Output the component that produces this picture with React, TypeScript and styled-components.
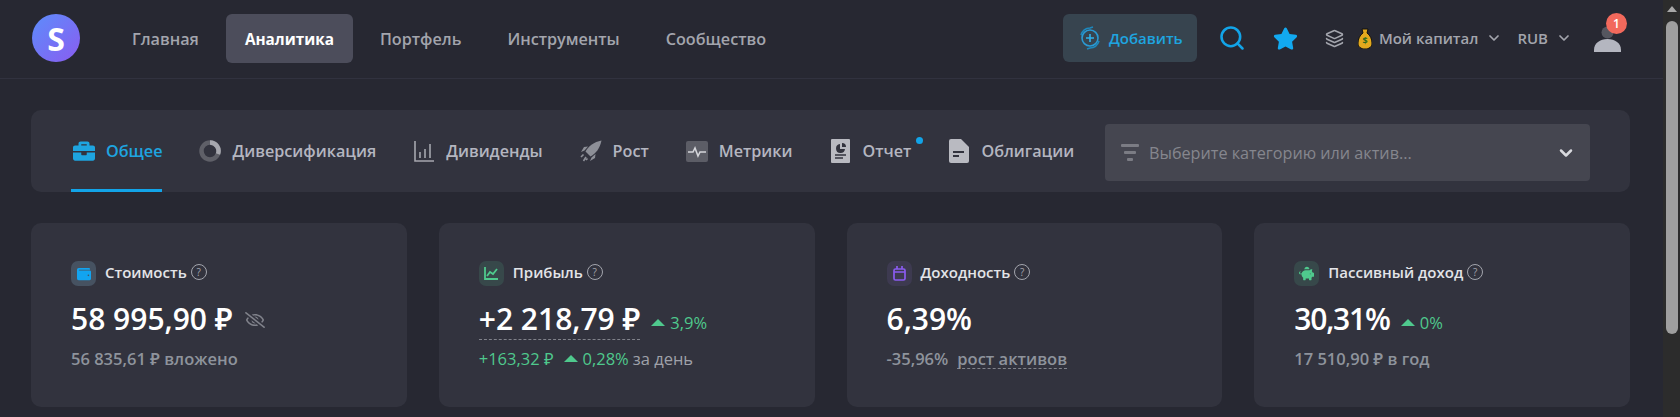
import { FC, ReactNode } from "react";
import styled, { createGlobalStyle } from "styled-components";
import { ChevronDown, Layers, Search } from "lucide-react";
import { FaBriefcase, FaPiggyBank, FaRegEyeSlash, FaStar, FaWallet } from "react-icons/fa";

const GlobalStyle = createGlobalStyle`
  html, body {
    margin: 0;
    padding: 0;
    height: 100%;
    overflow: hidden;
    background: #272832;
  }
  body {
    font-family: "Open Sans", "Noto Sans", sans-serif;
  }
`;

const Shell = styled.div`
  height: 100vh;
  display: flex;
  overflow: hidden;
`;

const Page = styled.div`
  flex: 1;
  min-width: 0;
  color: #fff;
`;

const ScrollTrack = styled.div`
  width: 17px;
  flex: none;
  background: #2c2c2c;
  display: flex;
  flex-direction: column;
  align-items: center;
`;

const ScrollArrow = styled.i`
  margin-top: 6px;
  width: 0;
  height: 0;
  border-left: 5px solid transparent;
  border-right: 5px solid transparent;
  border-bottom: 6px solid #a8a8a8;
`;

const ScrollThumb = styled.div`
  margin-top: 9px;
  width: 12px;
  height: 313px;
  border-radius: 6px;
  background: #9f9f9f;
`;

const Header = styled.header`
  height: 79px;
  padding: 14px 42px 0 32px;
  box-sizing: border-box;
  display: flex;
  align-items: flex-start;
  border-bottom: 1px solid #31323f;
`;

const Logo = styled.div`
  width: 48px;
  height: 48px;
  border-radius: 50%;
  background: linear-gradient(135deg, #5c8dfb 0%, #8a5cf0 100%);
  display: flex;
  align-items: center;
  justify-content: center;
  font-size: 32px;
  font-weight: 700;
  color: #fff;
  flex: none;
`;

const Nav = styled.nav`
  display: flex;
  gap: 8px;
  margin-left: 33px;
`;

const NavItem = styled.a<{ $active?: boolean }>`
  height: 49px;
  padding: 0 19px;
  display: flex;
  align-items: center;
  border-radius: 6px;
  font-size: ${(p) => (p.$active ? 15.3 : 16.2)}px;
  font-weight: ${(p) => (p.$active ? 700 : 600)};
  color: ${(p) => (p.$active ? "#fff" : "#a3a5ad")};
  background: ${(p) => (p.$active ? "#4c4d5b" : "transparent")};
`;

const HeaderRight = styled.div`
  margin-left: auto;
  height: 48px;
  display: flex;
  align-items: center;
`;

const AddButton = styled.button`
  width: 134px;
  height: 48px;
  padding: 0 0 0 16px;
  border: 0;
  border-radius: 6px;
  background: #37444f;
  color: #1ea5e0;
  font: 600 15px "Open Sans", sans-serif;
  display: flex;
  align-items: center;
  gap: 8px;
`;

const IconSlot = styled.span<{ $ml: number; $color?: string }>`
  margin-left: ${(p) => p.$ml}px;
  color: ${(p) => p.$color ?? "#a3a5ad"};
  display: flex;
  align-items: center;
`;

const Picker = styled.span<{ $ml: number }>`
  margin-left: ${(p) => p.$ml}px;
  display: flex;
  align-items: center;
  gap: 8px;
  font-size: 15px;
  font-weight: 600;
  color: #a3a5ad;
`;

const AvatarWrap = styled.span`
  position: relative;
  margin-left: 22px;
  width: 27px;
  height: 48px;
  display: flex;
  align-items: flex-end;
  padding-bottom: 10px;
  box-sizing: border-box;
`;

const Badge = styled.span`
  position: absolute;
  left: 12px;
  top: -1px;
  width: 21px;
  height: 21px;
  border-radius: 50%;
  background: #f2695c;
  color: #fff;
  font-size: 12px;
  font-weight: 600;
  display: flex;
  align-items: center;
  justify-content: center;
`;

const Main = styled.main`
  padding: 31px 33px 0 31px;
`;

const TabBar = styled.div`
  height: 82px;
  padding: 0 40px;
  box-sizing: border-box;
  display: flex;
  align-items: stretch;
  border-radius: 10px;
  background: #32333e;
`;

const Tabs = styled.div`
  display: flex;
  gap: 35px;
`;

const Tab = styled.a<{ $active?: boolean }>`
  position: relative;
  padding-left: 2px;
  display: flex;
  align-items: center;
  gap: 11px;
  font-size: 16.2px;
  font-weight: 600;
  color: ${(p) => (p.$active ? "#1ea5e0" : "#b4b6c0")};
  border-top: 3px solid transparent;
  border-bottom: 3px solid ${(p) => (p.$active ? "#12a4e8" : "transparent")};
`;

const TabIcon = styled.span<{ $active?: boolean }>`
  width: 22px;
  height: 24px;
  display: flex;
  align-items: center;
  justify-content: center;
  color: ${(p) => (p.$active ? "#1ea5e0" : "#8d8f97")};
`;

const Dot = styled.span`
  position: absolute;
  right: -12px;
  top: 24px;
  width: 7px;
  height: 7px;
  border-radius: 50%;
  background: #12a4e8;
`;

const Select = styled.div`
  margin: 14px 0 0 auto;
  width: 485px;
  height: 57px;
  padding: 0 14px 0 16px;
  box-sizing: border-box;
  display: flex;
  align-items: center;
  gap: 10px;
  border-radius: 4px;
  background: #454650;
  color: #85868e;
  font-size: 16.2px;
`;

const SelectArrow = styled(ChevronDown)`
  margin-left: auto;
  color: #d8d9de;
`;

const Cards = styled.div`
  margin-top: 31px;
  display: grid;
  grid-template-columns: repeat(4, 1fr);
  gap: 32px;
`;

const Card = styled.section`
  height: 184px;
  padding: 38px 40px 0;
  box-sizing: border-box;
  border-radius: 10px;
  background: #32333e;
`;

const CardHead = styled.div`
  display: flex;
  align-items: center;
  font-size: 15px;
  font-weight: 600;
  color: #e3e4e8;
`;

const CardTitle = styled.span`
  padding-bottom: 3px;
`;

const CardIcon = styled.span<{ $bg: string; $color: string }>`
  width: 25px;
  height: 25px;
  margin-right: 9px;
  border-radius: 7px;
  background: ${(p) => p.$bg};
  color: ${(p) => p.$color};
  display: flex;
  align-items: center;
  justify-content: center;
`;

const Help = styled.span`
  width: 14px;
  height: 14px;
  margin: 0 0 3px 4px;
  border: 1px solid #a3a5ad;
  border-radius: 50%;
  font-size: 10px;
  font-weight: 400;
  color: #a3a5ad;
  display: flex;
  align-items: center;
  justify-content: center;
`;

const ValueRow = styled.div`
  margin-top: 12px;
  height: 42px;
  display: flex;
  align-items: center;
`;

const Value = styled.span<{ $dashed?: boolean; $tight?: boolean }>`
  font-size: 30px;
  font-weight: 600;
  line-height: 41px;
  letter-spacing: ${(p) => (p.$tight ? "-1.2px" : "0")};
  color: #fff;
  border-bottom: 1px dashed ${(p) => (p.$dashed ? "#80828b" : "transparent")};
`;

const Delta = styled.span`
  margin: 6px 0 0 11px;
  display: flex;
  align-items: center;
  gap: 5px;
  font-size: 16.5px;
  color: #4fc98d;
`;

const Up = styled.i`
  width: 0;
  height: 0;
  border-left: 7px solid transparent;
  border-right: 7px solid transparent;
  border-bottom: 7px solid #4fc98d;
`;

const EyeSlot = styled.span`
  margin: 2px 0 0 12px;
  color: #80828b;
  display: flex;
`;

const Sub = styled.div`
  margin-top: 7px;
  display: flex;
  align-items: center;
  font-size: 16.5px;
  font-weight: 600;
  color: #8e939c;
`;

const Green = styled.span`
  margin-right: 10px;
  color: #4fc98d;
  font-weight: 400;
  display: flex;
  align-items: center;
  gap: 5px;
`;

const GreenTight = styled(Green)`
  margin-right: 4px;
`;

const Plain = styled.span`
  font-weight: 400;
  color: #9fa1a9;
`;

const Dashed = styled.span`
  margin-left: 9px;
  line-height: 19px;
  border-bottom: 1px dashed #80828b;
`;

const AddIcon = () => (
  <svg width="22" height="24" viewBox="0 0 22 24" fill="none" stroke="#1d88bd" strokeWidth="1.6">
    <circle cx="11" cy="12" r="8" stroke="#2a9ad4" />
    <path d="M11 8v8M7 12h8" stroke="#2fb2ec" />
    <path d="M2 9a10 10 0 0 1 9-7l3-1M20 15a10 10 0 0 1-9 7l-3 1" />
  </svg>
);

const MoneyBag = () => (
  <svg width="14" height="21" viewBox="0 0 14 21">
    <path d="M4 1h6L9 5c3 2 5 6 5 10 0 4-3 6-7 6s-7-2-7-6c0-4 2-8 5-10z" fill="#e3a91e" stroke="#111" />
    <text x="7" y="16" fontSize="9" fontWeight="700" textAnchor="middle" fill="#2d6a1f">$</text>
  </svg>
);

const Avatar = () => (
  <svg width="27" height="26" viewBox="0 0 27 26">
    <circle cx="13.5" cy="6.5" r="6" fill="#55565f" />
    <path d="M0 26v-2C0 17 6 13 13.5 13S27 17 27 24v2z" fill="#b4b6c0" />
  </svg>
);

const Donut = () => (
  <svg width="22" height="22" viewBox="0 0 22 22" fill="none" strokeWidth="4.5">
    <circle cx="11" cy="11" r="8.5" stroke="#5f6068" />
    <path d="M11 2.5A8.5 8.5 0 0 1 19 14" stroke="#a6a7ae" />
  </svg>
);

const BarsIcon = () => (
  <svg width="20" height="21" viewBox="0 0 20 21" fill="none" stroke="currentColor">
    <path d="M1 0v20h19" strokeWidth="1.6" stroke="#a6a7ae" />
    <path d="M6 11v6M11 8v9M16 3v14" strokeWidth="2" />
  </svg>
);

const RocketIcon = () => (
  <svg width="22" height="22" viewBox="0 0 22 22" fill="#8d8f97">
    <path d="M21.5.5C14 2 8.5 6 5.5 11.5l5 5C16 13.5 20 8 21.5.5z" />
    <path d="M4.5 10.5 1 12l3-5 4-.5zM11.5 17.5 10 21l5-3 .5-4z" />
    <path d="M3.5 14.5 1 17M6 17l-2.5 4M7.5 18.5 6 20" stroke="#8d8f97" strokeWidth="1.6" fill="none" />
  </svg>
);

const PulseIcon = () => (
  <svg width="22" height="21" viewBox="0 0 22 21">
    <rect width="22" height="21" rx="2" fill="#5c5d66" />
    <path d="M2 11h5l2-4 3 8 2-4h6" fill="none" stroke="#d4d5da" strokeWidth="1.6" />
  </svg>
);

const ReportIcon = () => (
  <svg width="19" height="24" viewBox="0 0 19 24">
    <rect width="19" height="24" rx="1" fill="#b9bac1" />
    <path d="M9 5a4.5 4.5 0 1 0 5 5H9z" fill="#32333e" />
    <path d="M11 4a4 4 0 0 1 4 4h-4z" fill="#32333e" />
    <path d="M4 16h11M4 19h8" stroke="#32333e" strokeWidth="1.6" />
  </svg>
);

const DocIcon = () => (
  <svg width="20" height="24" viewBox="0 0 20 24">
    <path d="M2 0h10l8 8v14a2 2 0 0 1-2 2H2a2 2 0 0 1-2-2V2a2 2 0 0 1 2-2z" fill="#b9bac1" />
    <path d="M4 13h11M4 17h6" stroke="#32333e" strokeWidth="1.8" />
  </svg>
);

const FilterIcon = () => (
  <svg width="18" height="18" viewBox="0 0 18 18" fill="#7b7c84">
    <rect width="18" height="3" rx="1" />
    <rect x="3" y="7" width="12" height="3" rx="1" />
    <rect x="6" y="14" width="6" height="3" rx="1" />
  </svg>
);

const TrendIcon = () => (
  <svg width="14" height="13" viewBox="0 0 14 13" fill="none" stroke="currentColor" strokeWidth="1.8">
    <path d="M1 0v12h13" />
    <path d="M3 9l3-4 3 2 4-5" />
  </svg>
);

const CalendarIcon = () => (
  <svg width="13" height="15" viewBox="0 0 13 15" fill="none" stroke="currentColor" strokeWidth="1.7">
    <rect x="1" y="3" width="11" height="11" rx="1.5" />
    <path d="M1 6h11M4 0v3M9 0v3" />
  </svg>
);

const navItems = ["Главная", "Аналитика", "Портфель", "Инструменты", "Сообщество"];

interface TabProps {
  label: string;
  icon: ReactNode;
  active?: boolean;
  dot?: boolean;
}

const tabs: TabProps[] = [
  { label: "Общее", icon: <FaBriefcase size={22} />, active: true },
  { label: "Диверсификация", icon: <Donut /> },
  { label: "Дивиденды", icon: <BarsIcon /> },
  { label: "Рост", icon: <RocketIcon /> },
  { label: "Метрики", icon: <PulseIcon /> },
  { label: "Отчет", icon: <ReportIcon />, dot: true },
  { label: "Облигации", icon: <DocIcon /> },
];

interface StatProps {
  title: string;
  iconBg: string;
  iconColor: string;
  icon: ReactNode;
  children: ReactNode;
}

const Stat: FC<StatProps> = ({ title, iconBg, iconColor, icon, children }) => (
  <Card>
    <CardHead>
      <CardIcon $bg={iconBg} $color={iconColor}>
        {icon}
      </CardIcon>
      <CardTitle>{title}</CardTitle>
      <Help>?</Help>
    </CardHead>
    {children}
  </Card>
);

export default function App() {
  return (
    <Shell>
      <GlobalStyle />
      <Page>
        <Header>
          <Logo>S</Logo>
          <Nav>
            {navItems.map((item) => (
              <NavItem key={item} $active={item === "Аналитика"}>
                {item}
              </NavItem>
            ))}
          </Nav>
          <HeaderRight>
            <AddButton>
              <AddIcon />
              Добавить
            </AddButton>
            <IconSlot $ml={21} $color="#12a4e8">
              <Search size={28} strokeWidth={2.2} />
            </IconSlot>
            <IconSlot $ml={27} $color="#12a9f0">
              <FaStar size={25} />
            </IconSlot>
            <IconSlot $ml={27}>
              <Layers size={19} />
            </IconSlot>
            <IconSlot $ml={14}>
              <MoneyBag />
            </IconSlot>
            <Picker $ml={7}>
              Мой капитал
              <ChevronDown size={16} strokeWidth={2.6} />
            </Picker>
            <Picker $ml={15}>
              RUB
              <ChevronDown size={16} strokeWidth={2.6} />
            </Picker>
            <AvatarWrap>
              <Avatar />
              <Badge>1</Badge>
            </AvatarWrap>
          </HeaderRight>
        </Header>
        <Main>
          <TabBar>
            <Tabs>
              {tabs.map((tab) => (
                <Tab key={tab.label} $active={tab.active}>
                  <TabIcon $active={tab.active}>{tab.icon}</TabIcon>
                  {tab.label}
                  {tab.dot && <Dot />}
                </Tab>
              ))}
            </Tabs>
            <Select>
              <FilterIcon />
              Выберите категорию или актив...
              <SelectArrow size={20} strokeWidth={3} />
            </Select>
          </TabBar>
          <Cards>
            <Stat title="Стоимость" iconBg="#465261" iconColor="#12a4f0" icon={<FaWallet size={14} />}>
              <ValueRow>
                <Value>58 995,90 ₽</Value>
                <EyeSlot>
                  <FaRegEyeSlash size={20} />
                </EyeSlot>
              </ValueRow>
              <Sub>56 835,61 ₽ вложено</Sub>
            </Stat>
            <Stat title="Прибыль" iconBg="#37484a" iconColor="#4fc98d" icon={<TrendIcon />}>
              <ValueRow>
                <Value $dashed>+2 218,79 ₽</Value>
                <Delta>
                  <Up />
                  3,9%
                </Delta>
              </ValueRow>
              <Sub>
                <Green>+163,32 ₽</Green>
                <GreenTight>
                  <Up />
                  0,28%
                </GreenTight>
                <Plain>за день</Plain>
              </Sub>
            </Stat>
            <Stat title="Доходность" iconBg="#3d3a50" iconColor="#8a5cf0" icon={<CalendarIcon />}>
              <ValueRow>
                <Value>6,39%</Value>
              </ValueRow>
              <Sub>
                -35,96%
                <Dashed>рост активов</Dashed>
              </Sub>
            </Stat>
            <Stat title="Пассивный доход" iconBg="#37484a" iconColor="#4fc98d" icon={<FaPiggyBank size={15} />}>
              <ValueRow>
                <Value $tight>30,31%</Value>
                <Delta>
                  <Up />
                  0%
                </Delta>
              </ValueRow>
              <Sub>17 510,90 ₽ в год</Sub>
            </Stat>
          </Cards>
        </Main>
      </Page>
      <ScrollTrack>
        <ScrollArrow />
        <ScrollThumb />
      </ScrollTrack>
    </Shell>
  );
}
